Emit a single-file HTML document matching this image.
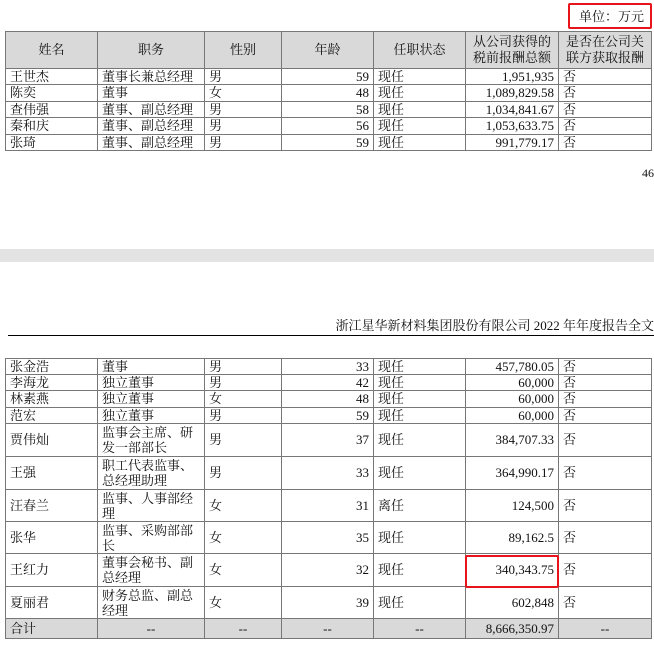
<!DOCTYPE html>
<html><head><meta charset="utf-8"><style>
html,body{margin:0;padding:0;background:#fff;width:654px;height:645px;overflow:hidden;position:relative}
body{font-family:"Liberation Serif","Noto Serif CJK SC",serif;font-size:13px;color:#111}
table{position:absolute;left:5px;border-collapse:collapse;table-layout:fixed}
td{border:1px solid #777;padding:0 4px;white-space:nowrap;line-height:14px;overflow:hidden}
td.r{text-align:right}
td.w{white-space:normal;line-height:15px}
tr.h td{background:#d9d9d9;text-align:center;line-height:16px}
.box{position:absolute;border:2px solid #e8141b;border-radius:2px}
.abs{position:absolute}
</style></head><body>
<div class="abs" style="right:10px;top:6px;font-size:13px">单位：万元</div>
<div class="box" style="left:568px;top:3px;width:80px;height:22px"></div>

<table style="top:31px;width:646px">
<colgroup><col style="width:92px"><col style="width:107px"><col style="width:77px"><col style="width:92px"><col style="width:92px"><col style="width:93px"><col style="width:93px"></colgroup>
<tr class="h" style="height:37px"><td>姓名</td><td>职务</td><td>性别</td><td>年龄</td><td>任职状态</td><td>从公司获得的<br>税前报酬总额</td><td>是否在公司关<br>联方获取报酬</td></tr>
<tr style="height:16px"><td>王世杰</td><td>董事长兼总经理</td><td>男</td><td class="r">59</td><td>现任</td><td class="r">1,951,935</td><td>否</td></tr>
<tr style="height:17px"><td>陈奕</td><td>董事</td><td>女</td><td class="r">48</td><td>现任</td><td class="r">1,089,829.58</td><td>否</td></tr>
<tr style="height:16px"><td>查伟强</td><td>董事、副总经理</td><td>男</td><td class="r">58</td><td>现任</td><td class="r">1,034,841.67</td><td>否</td></tr>
<tr style="height:17px"><td>秦和庆</td><td>董事、副总经理</td><td>男</td><td class="r">56</td><td>现任</td><td class="r">1,053,633.75</td><td>否</td></tr>
<tr style="height:16px"><td>张琦</td><td>董事、副总经理</td><td>男</td><td class="r">59</td><td>现任</td><td class="r">991,779.17</td><td>否</td></tr>
</table>

<div class="abs" style="left:642px;top:166px;font-size:12px">46</div>
<div class="abs" style="left:0;top:249px;width:654px;height:13px;background:#e3e3e3"></div>
<div class="abs" style="right:0;top:315px;font-size:13px;white-space:nowrap">浙江星华新材料集团股份有限公司 2022 年年度报告全文</div>
<div class="abs" style="left:8px;top:335px;width:646px;height:1px;background:#000"></div>

<table style="top:358px;width:646px">
<colgroup><col style="width:92px"><col style="width:107px"><col style="width:77px"><col style="width:92px"><col style="width:92px"><col style="width:93px"><col style="width:93px"></colgroup>
<tr style="height:16px"><td>张金浩</td><td>董事</td><td>男</td><td class="r">33</td><td>现任</td><td class="r">457,780.05</td><td>否</td></tr>
<tr style="height:16px"><td>李海龙</td><td>独立董事</td><td>男</td><td class="r">42</td><td>现任</td><td class="r">60,000</td><td>否</td></tr>
<tr style="height:17px"><td>林素燕</td><td>独立董事</td><td>女</td><td class="r">48</td><td>现任</td><td class="r">60,000</td><td>否</td></tr>
<tr style="height:16px"><td>范宏</td><td>独立董事</td><td>男</td><td class="r">59</td><td>现任</td><td class="r">60,000</td><td>否</td></tr>
<tr style="height:33px"><td>贾伟灿</td><td class="w">监事会主席、研发一部部长</td><td>男</td><td class="r">37</td><td>现任</td><td class="r">384,707.33</td><td>否</td></tr>
<tr style="height:33px"><td>王强</td><td class="w">职工代表监事、总经理助理</td><td>男</td><td class="r">33</td><td>现任</td><td class="r">364,990.17</td><td>否</td></tr>
<tr style="height:32px"><td>汪春兰</td><td class="w">监事、人事部经理</td><td>女</td><td class="r">31</td><td>离任</td><td class="r">124,500</td><td>否</td></tr>
<tr style="height:32px"><td>张华</td><td class="w">监事、采购部部长</td><td>女</td><td class="r">35</td><td>现任</td><td class="r">89,162.5</td><td>否</td></tr>
<tr style="height:33px"><td>王红力</td><td class="w">董事会秘书、副总经理</td><td>女</td><td class="r">32</td><td>现任</td><td class="r">340,343.75</td><td>否</td></tr>
<tr style="height:32px"><td>夏丽君</td><td class="w">财务总监、副总经理</td><td>女</td><td class="r">39</td><td>现任</td><td class="r">602,848</td><td>否</td></tr>
<tr class="h" style="height:20px"><td style="text-align:left">合计</td><td>--</td><td>--</td><td>--</td><td>--</td><td style="text-align:right">8,666,350.97</td><td>--</td></tr>
</table>
<div class="box" style="left:465px;top:555px;width:90px;height:29px"></div>
</body></html>
